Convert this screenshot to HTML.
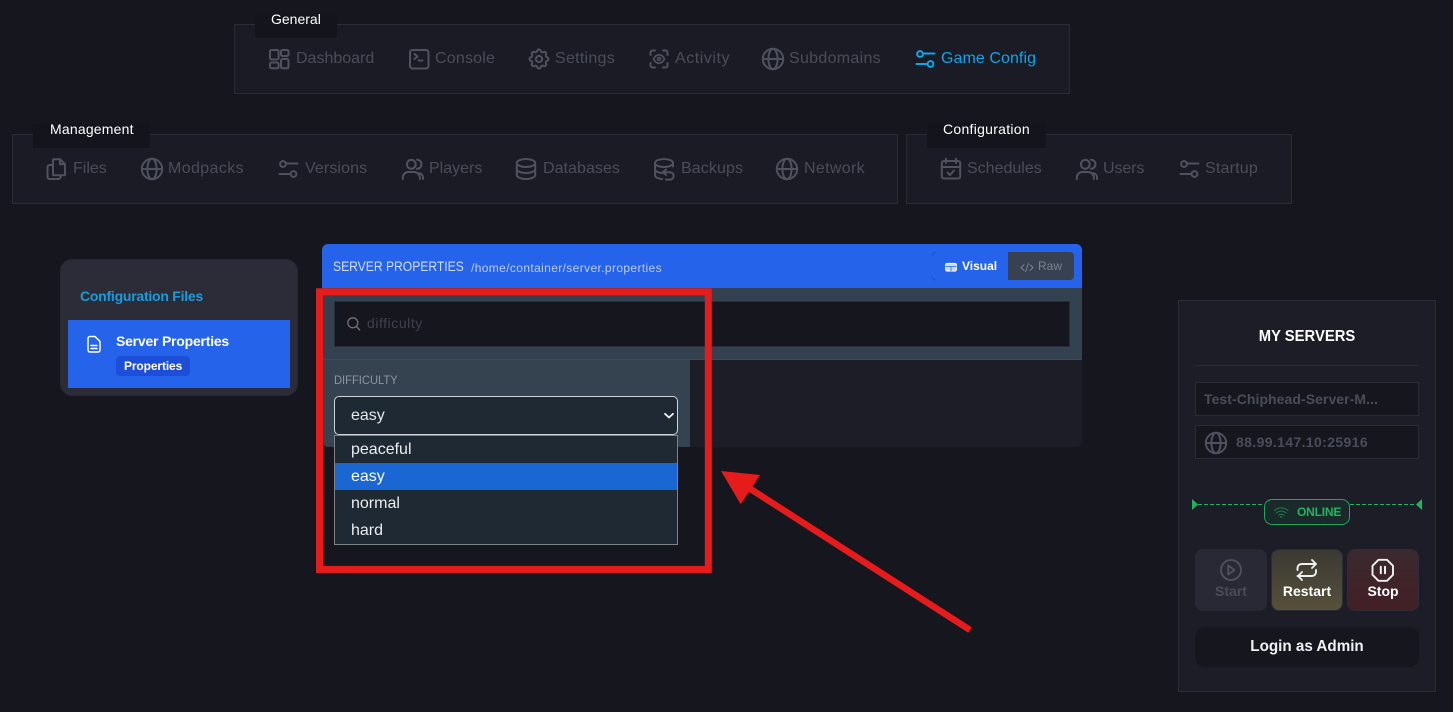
<!DOCTYPE html>
<html lang="en">
<head>
<meta charset="utf-8">
<title>Game Config</title>
<style>
html,body{margin:0;padding:0;width:1453px;height:712px;overflow:hidden;background:#15161e}
body{position:relative;font-family:"Liberation Sans",sans-serif}
div,span{position:absolute;box-sizing:border-box}
.t{white-space:nowrap;line-height:20px;font-size:14px}
.nav{font-size:16px;color:#4a4d59}
.box{background:#1a1b24;border:1px solid #2a2b36}
.lab{background:#14151c}
.w{color:#fff}
.b{font-weight:bold}
.c{text-align:center}
svg{position:absolute;left:0;top:0}
</style>
</head>
<body>
<!-- nav boxes -->
<div class="box" style="left:234px;top:24px;width:836px;height:70px"></div>
<div class="box" style="left:12px;top:134px;width:886px;height:70px"></div>
<div class="box" style="left:906px;top:134px;width:386px;height:70px"></div>
<div class="lab" style="left:255px;top:14px;width:82px;height:24px"></div>
<div class="lab" style="left:33px;top:124px;width:117px;height:24px"></div>
<div class="lab" style="left:927px;top:124px;width:119px;height:24px"></div>
<span class="t w" style="left:271px;top:9px">General</span>
<span class="t w" style="left:50px;top:119px;letter-spacing:.2px">Management</span>
<span class="t w" style="left:943px;top:119px;letter-spacing:.28px">Configuration</span>

<span class="t nav" style="left:296px;top:49px">Dashboard</span>
<span class="t nav" style="left:435px;top:49px;letter-spacing:.2px">Console</span>
<span class="t nav" style="left:555px;top:49px;letter-spacing:.27px">Settings</span>
<span class="t nav" style="left:675px;top:49px;letter-spacing:.55px">Activity</span>
<span class="t nav" style="left:789px;top:49px;letter-spacing:.3px">Subdomains</span>
<span class="t nav" style="left:941px;top:49px;letter-spacing:.07px;color:#0ea5e9">Game Config</span>

<span class="t nav" style="left:73px;top:159px">Files</span>
<span class="t nav" style="left:168px;top:159px;letter-spacing:.38px">Modpacks</span>
<span class="t nav" style="left:305px;top:159px;letter-spacing:.1px">Versions</span>
<span class="t nav" style="left:429px;top:159px">Players</span>
<span class="t nav" style="left:543px;top:159px;letter-spacing:.05px">Databases</span>
<span class="t nav" style="left:681px;top:159px;letter-spacing:.1px">Backups</span>
<span class="t nav" style="left:804px;top:159px;letter-spacing:.33px">Network</span>
<span class="t nav" style="left:967px;top:159px">Schedules</span>
<span class="t nav" style="left:1103px;top:159px;letter-spacing:-.1px">Users</span>
<span class="t nav" style="left:1205px;top:159px;letter-spacing:.2px">Startup</span>

<!-- sidebar -->
<div style="left:60px;top:259px;width:238px;height:137px;background:#2c2c38;border:1px solid #272732;border-radius:12px"></div>
<span class="t b" style="left:80px;top:286px;color:#1b9bdb;letter-spacing:-.24px">Configuration Files</span>
<div style="left:68px;top:320px;width:222px;height:68px;background:#2563eb"></div>
<span class="t b w" style="left:116px;top:331px;letter-spacing:-.22px">Server Properties</span>
<div style="left:116px;top:356px;width:74px;height:20px;background:#1d4ed8;border-radius:4px"></div>
<span class="t b w" style="left:124px;top:356px;font-size:12px;letter-spacing:-.12px">Properties</span>

<!-- main panel -->
<div style="left:322px;top:244px;width:760px;height:203px;background:#1c1d26;border-radius:6px"></div>
<div style="left:322px;top:244px;width:760px;height:44px;background:#2563eb;border-radius:6px 6px 0 0"></div>
<span class="t" style="left:333px;top:256px;color:#d4def8;transform:scaleX(.865);transform-origin:0 50%">SERVER PROPERTIES</span>
<span class="t" style="left:471px;top:258px;font-size:12px;color:#bccdf6;letter-spacing:.37px">/home/container/server.properties</span>
<span class="t b w" style="left:962px;top:256px;font-size:12px">Visual</span>
<div style="left:1008px;top:252px;width:66px;height:28px;background:#374151;border-radius:0 4px 4px 0"></div>
<span class="t" style="left:1038px;top:256px;font-size:12px;color:#7a838e">Raw</span>

<div style="left:322px;top:288px;width:760px;height:72px;background:#334150;border-bottom:1px solid #3e4a58"></div>
<div style="left:334px;top:301px;width:736px;height:46px;background:#15161e;border:1px solid #2a2d38"></div>
<span class="t" style="left:367px;top:313px;color:#3f424e;letter-spacing:.55px">difficulty</span>

<div style="left:322px;top:360px;width:368px;height:87px;background:#35424f;border-radius:0 0 0 6px"></div>
<span class="t" style="left:334px;top:370px;font-size:12px;color:#8d97a2;transform:scaleX(.93);transform-origin:0 50%">DIFFICULTY</span>
<div style="left:334px;top:396px;width:344px;height:39px;background:#1f2933;border:1px solid #d0d3d6;border-radius:5px"></div>
<span class="t" style="left:351px;top:406px;font-size:16px;color:#e5e7eb">easy</span>

<div style="left:334px;top:435px;width:344px;height:110px;background:#1f2933;border:1px solid #7d8285"></div>
<div style="left:335px;top:463px;width:342px;height:27px;background:#1a67d3"></div>
<span class="t" style="left:351px;top:440px;font-size:16px;color:#eceef0">peaceful</span>
<span class="t" style="left:351px;top:467px;font-size:16px;color:#fff">easy</span>
<span class="t" style="left:351px;top:494px;font-size:16px;color:#eceef0">normal</span>
<span class="t" style="left:351px;top:521px;font-size:16px;color:#eceef0">hard</span>

<!-- right panel -->
<div style="left:1178px;top:300px;width:258px;height:392px;background:#1c1d27;border:1px solid #2a2b36"></div>
<span class="t b w c" style="left:1195px;top:327px;width:224px;font-size:16px;transform:scaleX(.925)">MY SERVERS</span>
<div style="left:1195px;top:365px;width:224px;height:1px;background:#2a2b36"></div>
<div style="left:1195px;top:382px;width:224px;height:34px;background:#15161e;border:1px solid #2a2b36"></div>
<div style="left:1195px;top:425px;width:224px;height:34px;background:#15161e;border:1px solid #2a2b36"></div>
<span class="t b" style="left:1204px;top:389px;color:#4a4d59;letter-spacing:.06px">Test-Chiphead-Server-M...</span>
<span class="t b" style="left:1236px;top:432px;color:#4a4d59;letter-spacing:.37px">88.99.147.10:25916</span>

<div style="left:1264px;top:499px;width:86px;height:26px;background:#1a2a2b;border:1px solid #1fa657;border-radius:8px"></div>
<span class="t b" style="left:1297px;top:502px;font-size:12px;color:#22b35e;letter-spacing:-.2px">ONLINE</span>

<div style="left:1195px;top:549px;width:72px;height:62px;background:#282935;border-radius:8px"></div>
<div style="left:1271px;top:549px;width:72px;height:62px;background:linear-gradient(#3a3934,#57503a);border:1px solid #2c2d36;border-radius:8px"></div>
<div style="left:1347px;top:549px;width:72px;height:62px;background:linear-gradient(#3a2a2e,#431f26);border:1px solid #2c2d36;border-radius:8px"></div>
<span class="t b c" style="left:1195px;top:581px;width:72px;color:#4a4d59">Start</span>
<span class="t b c w" style="left:1271px;top:581px;width:72px">Restart</span>
<span class="t b c w" style="left:1347px;top:581px;width:72px">Stop</span>
<div style="left:1195px;top:627px;width:224px;height:40px;background:#15161e;border-radius:10px"></div>
<span class="t b c" style="left:1195px;top:637px;width:224px;font-size:16px;color:#f1f1f3;transform:scaleX(.95)">Login as Admin</span>

<svg width="1453" height="712" viewBox="0 0 1453 712" fill="none" stroke-linecap="round" stroke-linejoin="round">
<defs>
<g id="globe"><circle cx="12" cy="12" r="10.2"/><ellipse cx="12" cy="12" rx="4.6" ry="10.2"/><path d="M2 12h20"/></g>
<g id="sliders"><circle cx="4" cy="5" r="2.9"/><path d="M7.5 4.5h11"/><circle cx="14.5" cy="15" r="2.9"/><path d="M.5 15H11"/></g>
<g id="users"><circle cx="9.3" cy="5.3" r="4.4"/><path d="M.8 20v-1.5A5.5 5.5 0 0 1 6.3 13h6a5.5 5.5 0 0 1 5.5 5.5V20"/><path d="M15 .8a4.5 4.5 0 0 1 0 9"/><path d="M21 20v-1.5a4.5 4.5 0 0 0-3.3-4.3"/></g>
</defs>

<!-- General icons -->
<g stroke="#4f525e" stroke-width="2">
<rect x="270" y="50" width="8.600" height="9.500" rx="1.500"/>
<rect x="270" y="62.500" width="8.600" height="5.800" rx="1.500"/>
<rect x="281" y="50" width="7.500" height="6" rx="1.500"/>
<rect x="281" y="59" width="7.500" height="9.300" rx="1.500"/>

<rect x="410" y="50" width="18.500" height="18.500" rx="2.500"/>
<path d="M414.500 54l3 2.500-3 2.500M418.500 60.500h4"/>

<g transform="translate(526.4 46.4) scale(1.05)" stroke-width="1.9"><path d="M10.325 4.317c.426-1.756 2.924-1.756 3.350 0a1.724 1.724 0 0 0 2.573 1.066c1.543-.94 3.310.826 2.370 2.370a1.724 1.724 0 0 0 1.065 2.572c1.756.426 1.756 2.924 0 3.350a1.724 1.724 0 0 0-1.066 2.573c.94 1.543-.826 3.310-2.370 2.370a1.724 1.724 0 0 0-2.572 1.065c-.426 1.756-2.924 1.756-3.350 0a1.724 1.724 0 0 0-2.573-1.066c-1.543.94-3.310-.826-2.370-2.370a1.724 1.724 0 0 0-1.065-2.572c-1.756-.426-1.756-2.924 0-3.350a1.724 1.724 0 0 0 1.066-2.573c-.94-1.543.826-3.310 2.370-2.370c1 .608 2.296.07 2.572-1.065z"/><circle cx="12" cy="12" r="3"/></g>

<path d="M650.500 55v-2.500a2 2 0 0 1 2-2h2.500M663 50.500h2.500a2 2 0 0 1 2 2v2.500M667.500 63v2.500a2 2 0 0 1-2 2H663M655 67.500h-2.500a2 2 0 0 1-2-2V63"/>
<path d="M653.500 59c1.500-3 3.300-4.200 5.500-4.200s4 1.200 5.500 4.200c-1.500 3-3.300 4.200-5.500 4.200s-4-1.200-5.500-4.200z" stroke-width="1.700"/><circle cx="659" cy="59" r="1.500" stroke-width="1.500"/>

<use href="#globe" x="761" y="47"/>
</g>
<use href="#sliders" x="916" y="49" stroke="#0ea5e9" stroke-width="2"/>

<!-- Management icons -->
<g stroke="#4f525e" stroke-width="2">
<path d="M53 160.200a1 1 0 0 1 1-1h6l5 5v10a1 1 0 0 1-1 1H54a1 1 0 0 1-1-1z"/><path d="M60 159.200v5h5"/>
<path d="M52.500 165h-3a2 2 0 0 0-2 2v10a2 2 0 0 0 2 2h9a2 2 0 0 0 2-2v-1.500"/>
<use href="#globe" x="140" y="157"/>
<use href="#sliders" x="279" y="159"/>
<use href="#users" x="402" y="159"/>

<ellipse cx="526" cy="163" rx="9.200" ry="4"/><path d="M516.800 163v12c0 2.200 4.100 4 9.200 4s9.200-1.800 9.200-4v-12M516.800 169c0 2.200 4.100 4 9.200 4s9.200-1.800 9.200-4"/>

<ellipse cx="664" cy="163" rx="9" ry="4"/><path d="M655 163v12c0 2.200 3 3.700 7 4M655 169c0 2.200 3 3.700 7 4M673 163v3.500"/>
<path d="M666 169.500l-3 2.700 3 2.700M663 172.200h7a3.700 3.700 0 0 1 0 7.400h-4"/>

<use href="#globe" x="775" y="157"/>
<!-- Configuration icons -->
<rect x="941.800" y="161" width="18.400" height="17.500" rx="2"/><path d="M946 158.800v4.200M956 158.800v4.200M941.800 167h18.400M947.500 172.500l2.500 2.500 4-4.500"/>
<use href="#users" x="1076" y="159"/>
<use href="#sliders" x="1180" y="159"/>
<use href="#globe" x="1204" y="431"/>
</g>

<!-- sidebar doc -->
<g stroke="#fff" stroke-width="1.500"><path d="M88 338.500a2 2 0 0 1 2-2h5l5 5v8.500a2 2 0 0 1-2 2h-8a2 2 0 0 1-2-2z"/><path d="M91 345.500h6M91 348.500h6"/></g>

<!-- header icons -->
<path d="M936 252a4 4 0 0 0-4 4M932 276a4 4 0 0 0 4 4" stroke="#1d4ed8" stroke-width="1"/>
<g stroke="#eef2ff" stroke-width="1.200"><rect x="945.600" y="263.500" width="10.800" height="7.500" rx="1.500" fill="#c9d8fa"/><path d="M945.600 266.500h10.800M951 266.500v4.500" stroke="#2563eb" stroke-width=".8"/></g>
<g stroke="#7a838e" stroke-width="1"><path d="M1024 264.800l-3 2.800 3 2.800M1030 264.800l3 2.800-3 2.800M1028.300 263.500l-2.600 8"/></g>

<!-- search -->
<circle cx="352.800" cy="322.800" r="5" stroke="#6b7280" stroke-width="1.300"/><path d="M356.500 326.500l3.200 3.500" stroke="#6b7280" stroke-width="1.300"/>

<!-- chevron -->
<path d="M665 413.800l4 3.700 4-3.700" stroke="#f1f1f1" stroke-width="1.800"/>

<!-- status -->
<path d="M1198 504.500h66M1350 504.500h66" stroke="#1fb45e" stroke-width="1" stroke-dasharray="4 2" stroke-linecap="butt"/>
<path d="M1192 499l6 5.500-6 5.500zM1422 499l-6 5.500 6 5.500z" fill="#1fb45e"/>
<g stroke="#1d7a48" stroke-width="1"><path d="M1274.500 510.500a10 10 0 0 1 13.500 0M1276.500 513a7 7 0 0 1 9.500 0M1278.500 515.300a4 4 0 0 1 5.500 0"/><circle cx="1281.200" cy="517" r=".5"/></g>

<!-- button icons -->
<g stroke="#4f525e" stroke-width="1.800"><circle cx="1231" cy="570" r="10"/><path d="M1228.200 565.500v9l6.300-4.500z"/></g>
<g stroke="#f0f0f0" stroke-width="1.900"><path d="M1297.500 570v-2a4 4 0 0 1 4-4h14.500M1312 560l4 4-4 4M1316 570v2a4 4 0 0 1-4 4h-14.500M1302 580l-4-4 4-4"/></g>
<g stroke="#f0f0f0" stroke-width="1.900"><path d="M1378.500 559.800h8.500l6 6v9l-6 6h-8.500l-6-6v-9z"/><path d="M1380.800 566.800v6.500M1385 566.800v6.500" stroke-width="2"/></g>

<!-- annotation -->
<rect x="319.500" y="291.800" width="388.800" height="277.600" stroke="#e61c1c" stroke-width="7" stroke-linecap="butt" stroke-linejoin="miter"/>
<path d="M721 471l39 4-19.300 29.300z" fill="#e61c1c"/>
<path d="M749 488l221 142" stroke="#e61c1c" stroke-width="6.500" stroke-linecap="butt"/>
</svg>
</body>
</html>
